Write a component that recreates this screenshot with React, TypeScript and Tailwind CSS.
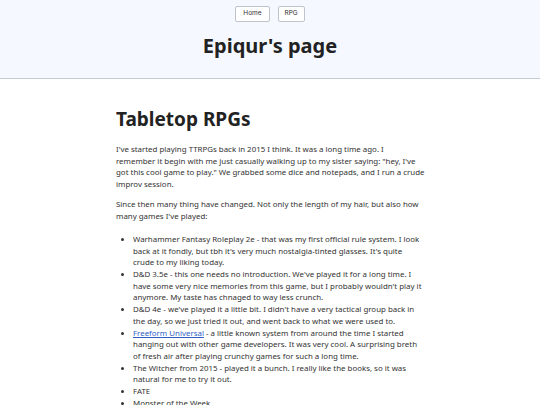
import React from "react";

const items: React.ReactNode[] = [
  "Warhammer Fantasy Roleplay 2e - that was my first official rule system. I look back at it fondly, but tbh it's very much nostalgia-tinted glasses. It's quite crude to my liking today.",
  "D&D 3.5e - this one needs no introduction. We've played it for a long time. I have some very nice memories from this game, but I probably wouldn't play it anymore. My taste has chnaged to way less crunch.",
  "D&D 4e - we've played it a little bit. I didn't have a very tactical group back in the day, so we just tried it out, and went back to what we were used to.",
  <>
    <a href="#" className="text-[#2f5fc4] underline">Freeform Universal</a> - a little known system from around the time I started hanging out with other game developers. It was very cool. A surprising breth of fresh air after playing crunchy games for such a long time.
  </>,
  "The Witcher from 2015 - played it a bunch. I really like the books, so it was natural for me to try it out.",
  "FATE",
  "Monster of the Week",
];

const intro = [
  "I've started playing TTRPGs back in 2015 I think. It was a long time ago. I",
  "remember it begin with me just casually walking up to my sister saying: \"hey, I've",
  "got this cool game to play.\" We grabbed some dice and notepads, and I run a crude",
  "improv session.",
];

export default function App() {
  return (
    <div className="min-h-[405px] bg-white text-[#333] font-['Noto_Sans',sans-serif]">
      <header className="h-[79px] bg-[#f5f8fe] border-b border-[#c6cad3] flex flex-col items-center pt-[6px]">
        <nav className="flex gap-[8px]">
          <button className="h-[16px] px-[7px] bg-white border border-[#bfc3cb] rounded-[2px] text-[6.5px] text-[#333] font-['Inter',sans-serif]">Home</button>
          <button className="h-[16px] px-[6px] bg-white border border-[#bfc3cb] rounded-[2px] text-[6.5px] text-[#333] font-['Inter',sans-serif]">RPG</button>
        </nav>
        <h1 className="mt-[12px] text-[20px] leading-[24px] font-bold text-[#222]">Epiqur's page</h1>
      </header>
      <main className="w-[308px] mx-auto pt-[29px] text-[7.9px] leading-[11.5px]">
        <h2 className="text-[19px] leading-[23px] font-bold text-[#222] mb-[13px]">Tabletop RPGs</h2>
        <p className="mb-[9px]">
          {intro.map((line, i) => (
            <span key={i} className="block whitespace-nowrap">{line}</span>
          ))}
        </p>
        <p className="mb-[12px]">
          Since then many thing have changed. Not only the length of my hair, but also how many games I've played:
        </p>
        <ul className="list-disc pl-[17px] pr-[2px] flex flex-col gap-[0.5px]">
          {items.map((it, i) => (
            <li key={i}>{it}</li>
          ))}
        </ul>
      </main>
    </div>
  );
}
